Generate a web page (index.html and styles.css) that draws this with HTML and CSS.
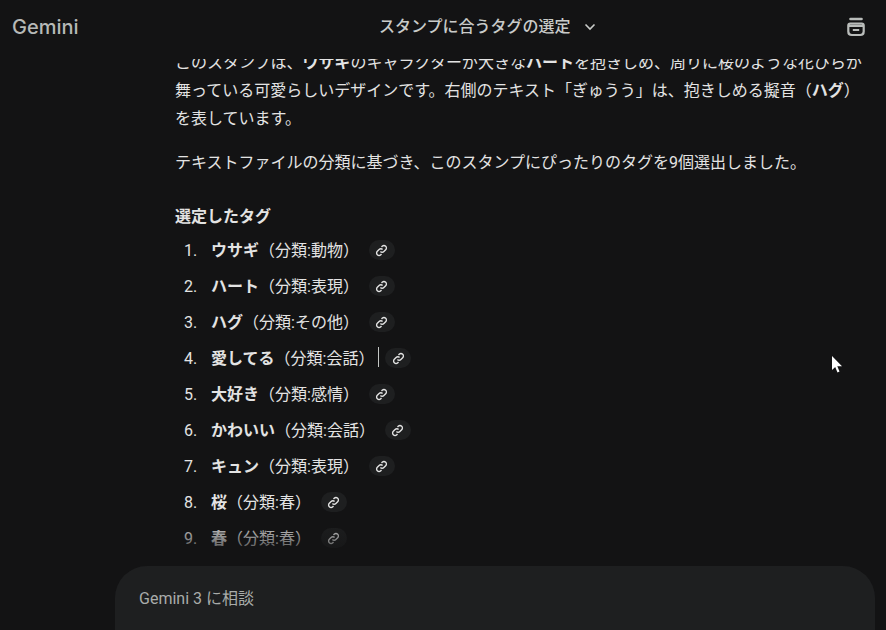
FILE: index.html
```html
<!DOCTYPE html>
<html lang="ja">
<head>
<meta charset="utf-8">
<title>Gemini</title>
<link rel="stylesheet" href="styles.css">
</head>
<body>
<div class="app">
  <header class="topbar">
    <div class="logo">Gemini</div>
    <div class="title"><span class="title-text">スタンプに合うタグの選定</span>
      <svg class="chevron" viewBox="0 0 12 8" width="12" height="8"><path d="M1.500 1.500 6 6l4.500-4.500" fill="none" stroke="currentColor" stroke-width="1.600"/></svg>
    </div>
    <svg class="temp" viewBox="0 0 20 20" width="20" height="20"><path d="M4.500 2h11" fill="none" stroke="currentColor" stroke-width="2.600" stroke-linecap="round"/><path d="M2.300 8.500c0-1.200.8-2 2-2h11.400c1.200 0 2 .8 2 2v6c0 2-1.500 3.500-3.500 3.500H5.800c-2 0-3.500-1.500-3.500-3.500zM2.300 8.800h15.400M6.800 13h6.400" fill="none" stroke="currentColor" stroke-width="2.200"/></svg>
  </header>
  <main class="chat">
    <div class="message">
      <p class="para">このスタンプは、<b>ウサギ</b>のキャラクターが大きな<b>ハート</b>を抱きしめ、周りに桜のような花びらが舞っている可愛らしいデザインです。右側のテキスト「ぎゅうう」は、抱きしめる擬音（<b>ハグ</b>）を表しています。</p>
      <p class="para">テキストファイルの分類に基づき、このスタンプにぴったりのタグを9個選出しました。</p>
      <h3 class="heading">選定したタグ</h3>
      <ol class="tags">
        <li class="tag"><span class="num">1.</span><b>ウサギ</b>（分類:動物）<span class="chip"><svg class="link" viewBox="0 0 24 24"><path d="M10 14a4.500 4.500 0 0 0 6.400 0l3.300-3.300a4.500 4.500 0 0 0-6.400-6.400l-1.300 1.300M14 10a4.500 4.500 0 0 0-6.400 0l-3.300 3.300a4.500 4.500 0 0 0 6.400 6.400l1.300-1.300"/></svg></span></li>
        <li class="tag"><span class="num">2.</span><b>ハート</b>（分類:表現）<span class="chip"><svg class="link" viewBox="0 0 24 24"><path d="M10 14a4.500 4.500 0 0 0 6.400 0l3.300-3.300a4.500 4.500 0 0 0-6.400-6.400l-1.300 1.300M14 10a4.500 4.500 0 0 0-6.400 0l-3.300 3.300a4.500 4.500 0 0 0 6.400 6.400l1.300-1.300"/></svg></span></li>
        <li class="tag"><span class="num">3.</span><b>ハグ</b>（分類:その他）<span class="chip"><svg class="link" viewBox="0 0 24 24"><path d="M10 14a4.500 4.500 0 0 0 6.400 0l3.300-3.300a4.500 4.500 0 0 0-6.400-6.400l-1.300 1.300M14 10a4.500 4.500 0 0 0-6.400 0l-3.300 3.300a4.500 4.500 0 0 0 6.400 6.400l1.300-1.300"/></svg></span></li>
        <li class="tag"><span class="num">4.</span><b>愛してる</b>（分類:会話）<span class="caret"></span><span class="chip chip-after-caret"><svg class="link" viewBox="0 0 24 24"><path d="M10 14a4.500 4.500 0 0 0 6.400 0l3.300-3.300a4.500 4.500 0 0 0-6.400-6.400l-1.300 1.300M14 10a4.500 4.500 0 0 0-6.400 0l-3.300 3.300a4.500 4.500 0 0 0 6.400 6.400l1.300-1.300"/></svg></span></li>
        <li class="tag"><span class="num">5.</span><b>大好き</b>（分類:感情）<span class="chip"><svg class="link" viewBox="0 0 24 24"><path d="M10 14a4.500 4.500 0 0 0 6.400 0l3.300-3.300a4.500 4.500 0 0 0-6.400-6.400l-1.300 1.300M14 10a4.500 4.500 0 0 0-6.400 0l-3.300 3.300a4.500 4.500 0 0 0 6.400 6.400l1.300-1.300"/></svg></span></li>
        <li class="tag"><span class="num">6.</span><b>かわいい</b>（分類:会話）<span class="chip"><svg class="link" viewBox="0 0 24 24"><path d="M10 14a4.500 4.500 0 0 0 6.400 0l3.300-3.300a4.500 4.500 0 0 0-6.400-6.400l-1.300 1.300M14 10a4.500 4.500 0 0 0-6.400 0l-3.300 3.300a4.500 4.500 0 0 0 6.400 6.400l1.300-1.300"/></svg></span></li>
        <li class="tag"><span class="num">7.</span><b>キュン</b>（分類:表現）<span class="chip"><svg class="link" viewBox="0 0 24 24"><path d="M10 14a4.500 4.500 0 0 0 6.400 0l3.300-3.300a4.500 4.500 0 0 0-6.400-6.400l-1.300 1.300M14 10a4.500 4.500 0 0 0-6.400 0l-3.300 3.300a4.500 4.500 0 0 0 6.400 6.400l1.300-1.300"/></svg></span></li>
        <li class="tag"><span class="num">8.</span><b>桜</b>（分類:春）<span class="chip"><svg class="link" viewBox="0 0 24 24"><path d="M10 14a4.500 4.500 0 0 0 6.400 0l3.300-3.300a4.500 4.500 0 0 0-6.400-6.400l-1.300 1.300M14 10a4.500 4.500 0 0 0-6.400 0l-3.300 3.300a4.500 4.500 0 0 0 6.400 6.400l1.300-1.300"/></svg></span></li>
        <li class="tag"><span class="num">9.</span><b>春</b>（分類:春）<span class="chip"><svg class="link" viewBox="0 0 24 24"><path d="M10 14a4.500 4.500 0 0 0 6.400 0l3.300-3.300a4.500 4.500 0 0 0-6.400-6.400l-1.300 1.300M14 10a4.500 4.500 0 0 0-6.400 0l-3.300 3.300a4.500 4.500 0 0 0 6.400 6.400l1.300-1.300"/></svg></span></li>
      </ol>
    </div>
    <svg class="pointer" viewBox="0 0 11 18" width="11" height="18"><path d="M0 0v14l3.200-3 2.300 5.500 2-.9L5.300 10.300H10z" fill="#fff"/></svg>
  </main>
  <div class="composer">Gemini 3 に相談</div>
</div>
</body>
</html>
```
FILE: styles.css
```css
* { box-sizing: border-box; }
html, body { margin: 0; height: 100%; }
body {
  background: #131314;
  color: #e3e3e3;
  font-family: "Roboto", "Noto Sans CJK JP", sans-serif;
  font-size: 16px;
  overflow: hidden;
}
.app { display: flex; flex-direction: column; height: 630px; }
.topbar {
  flex: 0 0 59px;
  display: flex;
  align-items: center;
  padding: 0 20px 5px 12px;
  color: #c4c7c5;
}
.logo {
  font-family: "Inter", sans-serif;
  font-size: 20px;
  font-weight: 500;
  width: 367px;
  color: #b6b9b7;
}
.title { flex: 1; display: flex; align-items: center; font-size: 16px; font-weight: 500; color: #c9cbc9; }
.title-text { line-height: 22px; margin-top: -1px; }
.chevron { margin-left: 13px; }
.temp { color: #b9bcba; }
.chat { flex: 1; position: relative; overflow: hidden; min-height: 0; }
.chat::after {
  content: "";
  position: absolute;
  left: 0; right: 0; bottom: 0;
  height: 48px;
  background: linear-gradient(to bottom, rgba(19,19,20,0), #131314);
}
.message { width: 688px; margin: -10px 0 0 175px; }
.para { margin: 0 0 16px; line-height: 28px; }
.para b, .tag b { font-weight: 700; }
.heading { margin: 26px 0 0; font-size: 16px; font-weight: 700; line-height: 28px; }
.tags { list-style: none; margin: 0; padding: 0 0 0 9px; }
.tag { display: flex; align-items: center; height: 36px; white-space: nowrap; }
.num { width: 27px; padding-top: 2px; }
.chip {
  display: flex; align-items: center; justify-content: center;
  width: 26px; height: 20px; margin: 2px 0 0 10px;
  border-radius: 10px;
  background: #1e1f20;
}
.chip-after-caret { margin-left: 6px; }
.caret { width: 1px; height: 20px; background: #c4c7c5; margin-left: 4px; }
.link { width: 13px; height: 13px; fill: none; stroke: #e3e3e3; stroke-width: 2.600; }
.pointer { position: absolute; left: 832px; top: 297px; z-index: 2; }
.composer {
  flex: 0 0 64px;
  margin: 0 11px 0 115px;
  padding: 23px 24px 0;
  border-radius: 32px 32px 0 0;
  background: #1e1f20;
  color: #a9acaa;
  line-height: 20px;
  font-size: 16px;
}
```
